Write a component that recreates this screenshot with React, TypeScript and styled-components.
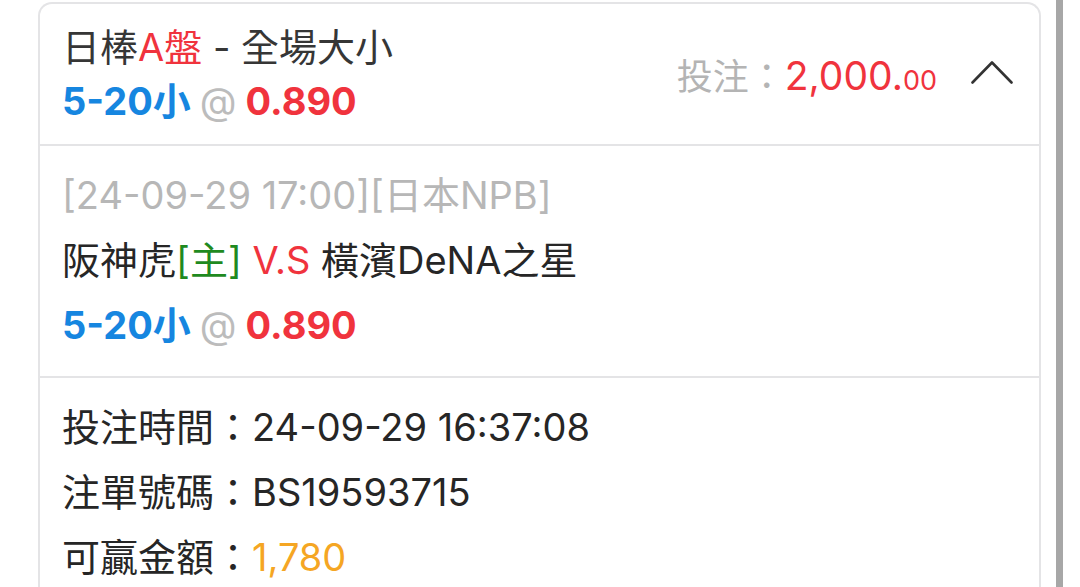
import React from 'react';
import styled, { createGlobalStyle } from 'styled-components';

const GlobalStyle = createGlobalStyle`
  html, body {
    margin: 0;
    padding: 0;
    background: #ffffff;
    overflow: hidden;
  }
  body {
    font-family: Inter, "Noto Sans CJK TC", "Noto Sans", sans-serif;
  }
`;

interface IInfo {
  label: string;
  value: string;
  highlight?: boolean;
}

const infoRows: IInfo[] = [
  { label: '投注時間', value: '24-09-29 16:37:08' },
  { label: '注單號碼', value: 'BS19593715' },
  { label: '可贏金額', value: '1,780', highlight: true },
];

function Odds() {
  return (
    <OddsLine>
      <Pick>5-20小</Pick> <At>@</At> <Price>0.890</Price>
    </OddsLine>
  );
}

function App() {
  return (
    <Page>
      <GlobalStyle />
      <Card>
        <Header>
          <div>
            <Title>
              日棒<Red>A盤</Red> - 全場大小
            </Title>
            <Odds />
          </div>
          <Summary>
            <Stake>
              <StakeLabel>投注：</StakeLabel>
              <StakeAmount>2,000.</StakeAmount>
              <StakeCents>00</StakeCents>
            </Stake>
            <Chevron viewBox="0 0 42 24" fill="none">
              <path d="M1.5 22.5 L21 2.5 L40.5 22.5" stroke="#333" strokeWidth="2.6" strokeLinecap="round" strokeLinejoin="round" />
            </Chevron>
          </Summary>
        </Header>
        <Section>
          <Line>
            <Muted>[24-09-29 17:00][日本NPB]</Muted>
          </Line>
          <Line>
            阪神虎<Home>[主]</Home> <Red>V.S</Red> 橫濱DeNA之星
          </Line>
          <Odds />
        </Section>
        <Section>
          {infoRows.map(row => (
            <Line key={row.label}>
              {row.label}：{row.highlight ? <Orange>{row.value}</Orange> : row.value}
            </Line>
          ))}
        </Section>
      </Card>
      <ScrollThumb />
    </Page>
  );
}

const Page = styled.div`
  display: grid;
  grid-template-columns: 1003px 7px;
  column-gap: 15px;
  align-items: start;
  height: 587px;
  box-sizing: border-box;
  padding-left: 38px;
  overflow: hidden;
`;

const Card = styled.div`
  box-sizing: border-box;
  margin-top: 2px;
  border: 2px solid #e4e4e6;
  border-bottom: none;
  border-radius: 14px 14px 0 0;
  background: #ffffff;
`;

const ScrollThumb = styled.div`
  width: 7px;
  height: 587px;
  background-color: #a7a7a7;
`;

const Header = styled.header`
  display: flex;
  align-items: center;
  justify-content: space-between;
  padding: 16px 26px 16px 22px;
  border-bottom: 2px solid #e4e4e6;
`;

const Title = styled.div`
  font-size: 38px;
  line-height: 54px;
  color: #363636;
`;

const OddsLine = styled.div`
  font-size: 38px;
  line-height: 54px;
  font-weight: 700;
  white-space: nowrap;
`;

const Pick = styled.span`
  color: #1686e0;
`;

const At = styled.span`
  color: #bcbcbc;
  font-weight: 400;
`;

const Price = styled.span`
  color: #f0333d;
`;

const Red = styled.span`
  color: #f0333d;
`;

const Summary = styled.div`
  display: flex;
  align-items: center;
  gap: 34px;
`;

const Stake = styled.div`
  display: flex;
  align-items: baseline;
  white-space: nowrap;
`;

const StakeLabel = styled.span`
  font-size: 36px;
  color: #b4b4b4;
`;

const StakeAmount = styled.span`
  font-size: 39px;
  color: #f0333d;
`;

const StakeCents = styled.span`
  font-size: 27px;
  color: #f0333d;
`;

const Chevron = styled.svg`
  width: 42px;
  height: 24px;
  margin-top: -4px;
`;

const Section = styled.section`
  padding: 17px 24px 18px 22px;
  border-bottom: 2px solid #e4e4e6;
  ${OddsLine} {
    line-height: 65px;
  }
`;

const Line = styled.div`
  font-size: 38px;
  line-height: 65px;
  color: #262626;
  white-space: nowrap;
`;

const Muted = styled.span`
  color: #b7b7b7;
`;

const Home = styled.span`
  color: #1f8a1f;
`;

const Orange = styled.span`
  color: #f5a623;
`;

export default App;
